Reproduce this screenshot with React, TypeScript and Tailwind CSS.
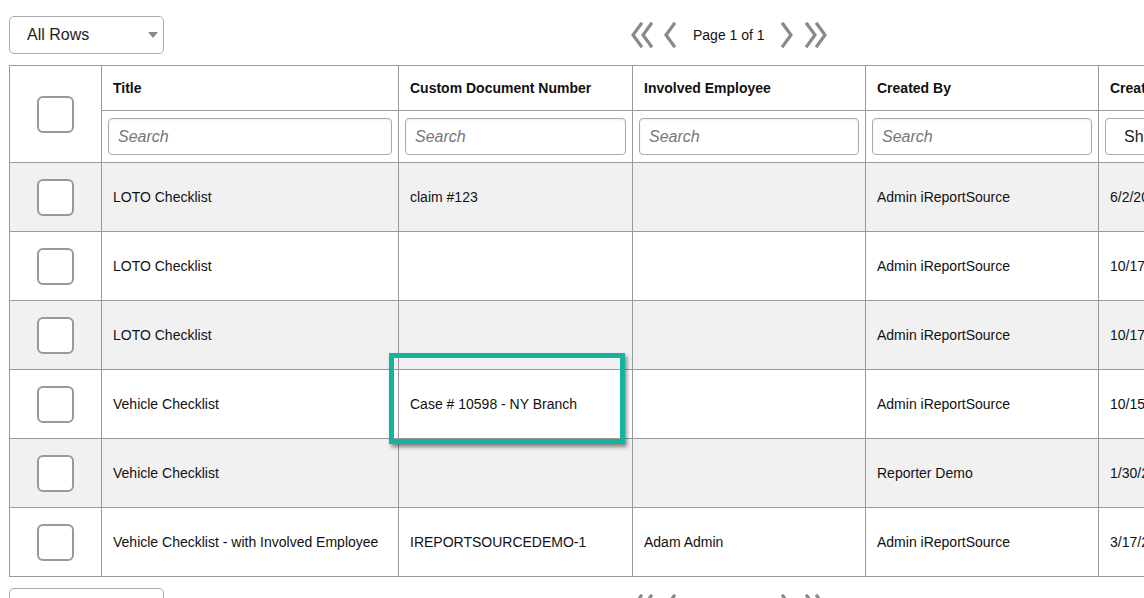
import React from 'react';

// Liste des formulaires — tableau avec filtres par colonne
const rows = [
  { title: 'LOTO Checklist', doc: 'claim #123', emp: '', by: 'Admin iReportSource', date: '6/2/2020' },
  { title: 'LOTO Checklist', doc: '', emp: '', by: 'Admin iReportSource', date: '10/17/2019' },
  { title: 'LOTO Checklist', doc: '', emp: '', by: 'Admin iReportSource', date: '10/17/2019' },
  { title: 'Vehicle Checklist', doc: 'Case # 10598 - NY Branch', emp: '', by: 'Admin iReportSource', date: '10/15/2019' },
  { title: 'Vehicle Checklist', doc: '', emp: '', by: 'Reporter Demo', date: '1/30/2020' },
  { title: 'Vehicle Checklist - with Involved Employee', doc: 'IREPORTSOURCEDEMO-1', emp: 'Adam Admin', by: 'Admin iReportSource', date: '3/17/2020' },
];

const font = { fontFamily: '"Liberation Sans", Arial, sans-serif' };

function DoubleLeft() {
  return (
    <svg width="24" height="26" viewBox="0 0 24 26" fill="none" stroke="#8a8a8a" strokeWidth="3.2" strokeLinecap="square">
      <path d="M11 2 L3 13 L11 24" />
      <path d="M21 2 L13 13 L21 24" />
    </svg>
  );
}
function SingleLeft() {
  return (
    <svg width="14" height="26" viewBox="0 0 14 26" fill="none" stroke="#8a8a8a" strokeWidth="3.2" strokeLinecap="square">
      <path d="M11 2 L3 13 L11 24" />
    </svg>
  );
}
function SingleRight() {
  return (
    <svg width="14" height="26" viewBox="0 0 14 26" fill="none" stroke="#8a8a8a" strokeWidth="3.2" strokeLinecap="square">
      <path d="M3 2 L11 13 L3 24" />
    </svg>
  );
}
function DoubleRight() {
  return (
    <svg width="24" height="26" viewBox="0 0 24 26" fill="none" stroke="#8a8a8a" strokeWidth="3.2" strokeLinecap="square">
      <path d="M3 2 L11 13 L3 24" />
      <path d="M13 2 L21 13 L13 24" />
    </svg>
  );
}

function Controls() {
  return (
    <div className="flex items-center h-[38px] pl-[9px]">
      <div className="w-[155px] h-[38px] border border-[#aaa] rounded-[5px] flex items-center justify-between pl-[17px] pr-[5px] text-[16px] text-[#222] bg-white">
        <span>All Rows</span>
        <svg width="10" height="6" viewBox="0 0 10 6"><path d="M0 0 L10 0 L5 6 Z" fill="#888" /></svg>
      </div>
      <div className="flex items-center ml-[466px]">
        <DoubleLeft />
        <div className="ml-[9px]"><SingleLeft /></div>
        <span className="ml-[16px] text-[14px] text-[#111]">Page 1 of 1</span>
        <div className="ml-[15px]"><SingleRight /></div>
        <div className="ml-[10px]"><DoubleRight /></div>
      </div>
    </div>
  );
}

function Box() {
  return <div className="w-[37px] h-[37px] mx-auto rounded-[6px] border-2 border-[#999] bg-white" />;
}

function SearchInput() {
  return (
    <input
      placeholder="Search"
      className="w-full h-[37px] px-[9px] text-[16px] italic border border-[#aaa] rounded-[4px] shadow-[inset_0_1px_2px_rgba(0,0,0,0.08)] placeholder:text-[#777] outline-none bg-white"
      style={font}
    />
  );
}

export default function App() {
  const cols = ['Title', 'Custom Document Number', 'Involved Employee', 'Created By', 'Created Date'];
  return (
    <div className="relative w-[1144px] h-[598px] overflow-hidden bg-white" style={font}>
      <div className="pt-4">
        <Controls />
      </div>
      <div className="mt-[11px] ml-[9px]">
        <table className="border-collapse table-fixed w-[1330px] text-[#111]">
          <colgroup>
            <col className="w-[92px]" />
            <col className="w-[297px]" />
            <col className="w-[234px]" />
            <col className="w-[233px]" />
            <col className="w-[233px]" />
            <col className="w-[241px]" />
          </colgroup>
          <thead>
            <tr className="h-[45px]">
              <th rowSpan={2} className="border border-[#999] align-middle">
                <Box />
              </th>
              {cols.map((c) => (
                <th key={c} className="border border-[#999] text-left text-[14px] font-bold px-[11px] whitespace-nowrap overflow-hidden">
                  {c}
                </th>
              ))}
            </tr>
            <tr className="h-[52px]">
              {cols.slice(0, 4).map((c) => (
                <th key={c} className="border border-[#999] px-[6px] font-normal">
                  <SearchInput />
                </th>
              ))}
              <th className="border border-[#999] px-[6px] font-normal">
                <div className="h-[37px] border border-[#aaa] rounded-[4px] flex items-center pl-[18px] text-[16px] text-[#222]">Show All</div>
              </th>
            </tr>
          </thead>
          <tbody>
            {rows.map((r, i) => (
              <tr key={i} className={`h-[69px] ${i % 2 === 0 ? 'bg-[#f1f1f1]' : 'bg-white'}`}>
                <td className="border border-[#999]"><Box /></td>
                <td className="border border-[#999] px-[11px] text-[14px] whitespace-nowrap">{r.title}</td>
                <td className="border border-[#999] px-[11px] text-[14px] whitespace-nowrap">{r.doc}</td>
                <td className="border border-[#999] px-[11px] text-[14px] whitespace-nowrap">{r.emp}</td>
                <td className="border border-[#999] px-[11px] text-[14px] whitespace-nowrap">{r.by}</td>
                <td className="border border-[#999] px-[11px] text-[14px] whitespace-nowrap">{r.date}</td>
              </tr>
            ))}
          </tbody>
        </table>
      </div>
      <div className="mt-[11px]">
        <Controls />
      </div>

      {/* cadre de mise en évidence */}
      <div className="absolute left-[389px] top-[353px] w-[236px] h-[91px] border-[5px] border-[#14b39b] shadow-[2px_3px_4px_rgba(0,0,0,0.45)]" />
    </div>
  );
}
